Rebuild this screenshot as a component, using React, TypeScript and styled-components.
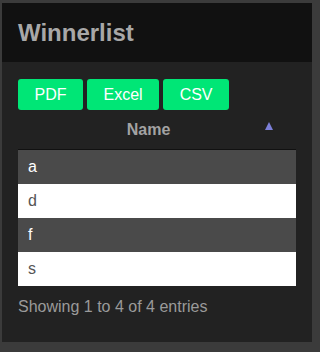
import styled, { createGlobalStyle } from "styled-components";

const GlobalStyle = createGlobalStyle`
  html, body {
    margin: 0;
    padding: 0;
    overflow: hidden;
    background-color: #3b3b3b;
    font-family: "Liberation Sans", Arial, sans-serif;
  }
`;

const Viewport = styled.div`
  width: 100vw;
  height: 100vh;
  overflow: hidden;
`;

const Card = styled.div`
  width: 310px;
  margin: 3px 0 0 2px;
`;

const CardHeader = styled.div`
  height: 59px;
  display: flex;
  align-items: center;
  padding-left: 16px;
  background-color: #111111;
`;

const Title = styled.h1`
  margin: 0;
  font-size: 24px;
  font-weight: bold;
  color: #a8a8a8;
`;

const CardBody = styled.div`
  height: 280px;
  box-sizing: border-box;
  padding: 17px 16px 0;
  background-color: #222222;
`;

const ButtonRow = styled.div`
  display: flex;
  gap: 4px;
`;

const ExportButton = styled.button`
  height: 31px;
  padding: 0 16.5px;
  border: none;
  border-radius: 3px;
  background-color: #00e676;
  color: #ffffff;
  font-family: inherit;
  font-size: 16px;
`;

const Table = styled.table`
  width: 100%;
  border-collapse: collapse;
  font-size: 16px;
`;

const HeadCell = styled.th`
  position: relative;
  height: 39px;
  padding: 0 27px 0 10px;
  text-align: center;
  font-weight: bold;
  color: #a3a3a3;
  border-bottom: 1px solid #111111;
`;

const SortArrow = styled.span`
  position: absolute;
  right: 23px;
  top: 12px;
  width: 0;
  height: 0;
  border-left: 4.5px solid transparent;
  border-right: 4.5px solid transparent;
  border-bottom: 8px solid #7c7fd8;
`;

const Row = styled.tr<{ $dark: boolean }>`
  height: 34px;
  background-color: ${(p) => (p.$dark ? "#4a4a4a" : "#ffffff")};
  color: ${(p) => (p.$dark ? "#ffffff" : "#555555")};
`;

const Cell = styled.td`
  padding: 0 10px;
`;

const Info = styled.div`
  padding-top: 12px;
  font-size: 16px;
  color: #9a9a9a;
`;

const winners = ["a", "d", "f", "s"];

export default function App() {
  return (
    <Viewport>
      <GlobalStyle />
      <Card>
        <CardHeader>
          <Title>Winnerlist</Title>
        </CardHeader>
        <CardBody>
          <ButtonRow>
            <ExportButton>PDF</ExportButton>
            <ExportButton>Excel</ExportButton>
            <ExportButton>CSV</ExportButton>
          </ButtonRow>
          <Table>
            <thead>
              <tr>
                <HeadCell>
                  Name
                  <SortArrow />
                </HeadCell>
              </tr>
            </thead>
            <tbody>
              {winners.map((name, i) => (
                <Row key={name} $dark={i % 2 === 0}>
                  <Cell>{name}</Cell>
                </Row>
              ))}
            </tbody>
          </Table>
          <Info>Showing 1 to 4 of 4 entries</Info>
        </CardBody>
      </Card>
    </Viewport>
  );
}
